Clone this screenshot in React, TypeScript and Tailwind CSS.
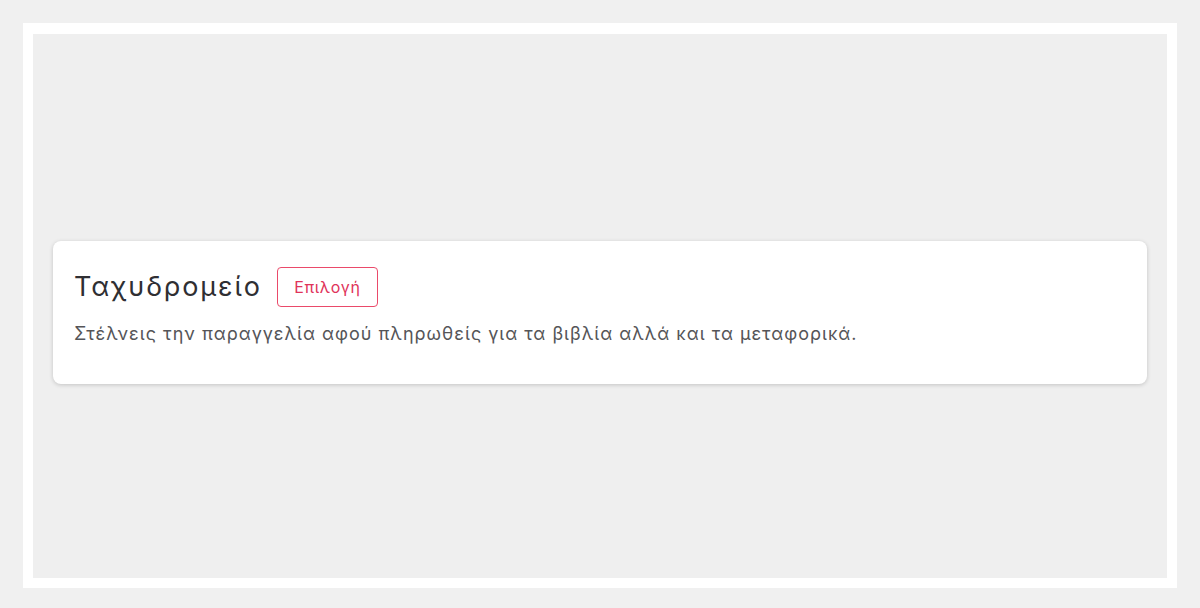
export default function App() {
  return (
    <div className="min-h-screen bg-[#f0f0f0] p-[23px] pb-[20px] font-['Inter','Noto_Sans',sans-serif]">
      <div className="h-[565px] bg-white pt-[11px] px-[10px] pb-[10px]">
        <div className="flex h-full flex-col justify-center bg-[#efefef] px-[20px] pt-[13px]">
          <div className="rounded-lg bg-white px-[21px] pt-[26px] pb-[38px] shadow-[0_1px_4px_rgba(0,0,0,0.18)]">
            <div className="flex items-center gap-[15px]">
              <h1 className="text-[27px] leading-[36px] font-normal tracking-[1.9px] text-[#2f2f33]">Ταχυδρομείο</h1>
              <button className="h-[40px] w-[101px] rounded-[4px] border border-[#ea4a6a] text-[16px] tracking-[0.6px] text-[#e0345a]">
                Επιλογή
              </button>
            </div>
            <p className="mt-[15px] text-[18px] leading-[24px] tracking-[1px] text-[#555558]">
              Στέλνεις την παραγγελία αφού πληρωθείς για τα βιβλία αλλά και τα μεταφορικά.
            </p>
          </div>
        </div>
      </div>
    </div>
  );
}
